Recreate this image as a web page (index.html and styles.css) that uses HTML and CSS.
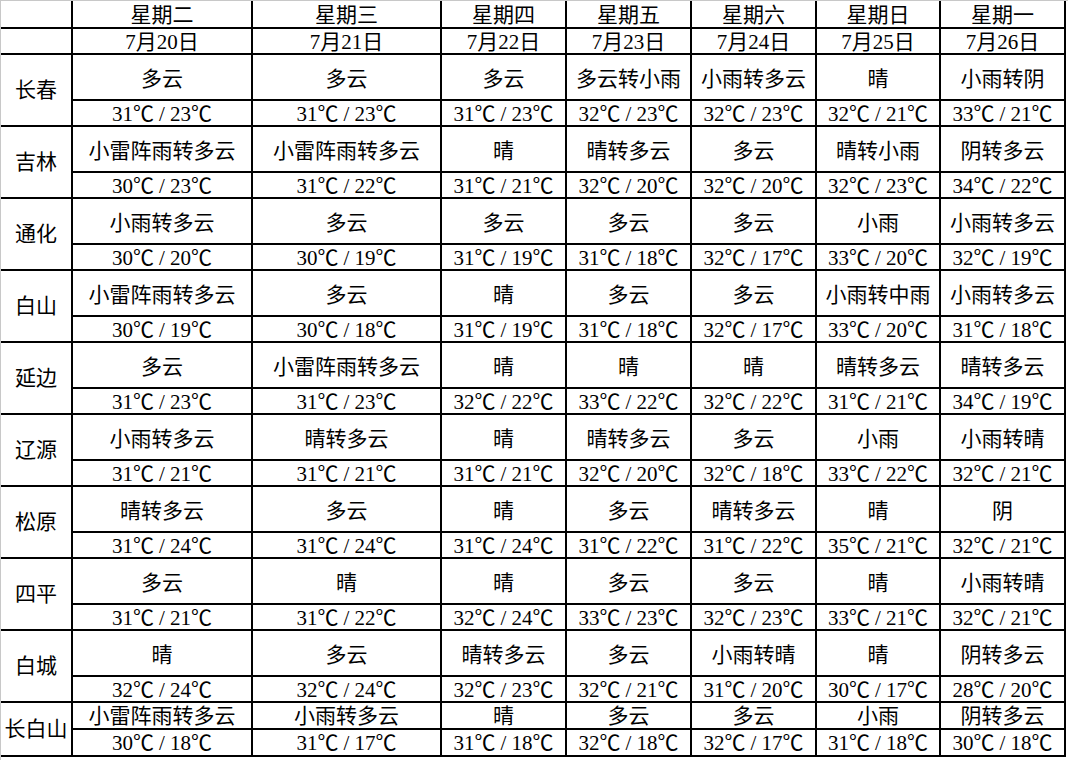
FILE: index.html
```html
<!DOCTYPE html>
<html lang="zh-CN">
<head>
<meta charset="utf-8">
<title>吉林省天气预报</title>
<link rel="stylesheet" href="styles.css">
</head>
<body>
<div class="sheet">
  <div class="grid">
    <div class="cell"></div>
    <div class="cell hd">星期二</div><div class="cell hd">星期三</div><div class="cell hd">星期四</div><div class="cell hd">星期五</div><div class="cell hd">星期六</div><div class="cell hd">星期日</div><div class="cell hd">星期一</div>
    <div class="cell"></div>
    <div class="cell dt">7月20日</div><div class="cell dt">7月21日</div><div class="cell dt">7月22日</div><div class="cell dt">7月23日</div><div class="cell dt">7月24日</div><div class="cell dt">7月25日</div><div class="cell dt">7月26日</div>

    <div class="cell city">长春</div>
    <div class="cell wx">多云</div><div class="cell wx">多云</div><div class="cell wx">多云</div><div class="cell wx">多云转小雨</div><div class="cell wx">小雨转多云</div><div class="cell wx">晴</div><div class="cell wx">小雨转阴</div>
    <div class="cell tp">31℃<span class="sl">/</span>23℃</div><div class="cell tp">31℃<span class="sl">/</span>23℃</div><div class="cell tp">31℃<span class="sl">/</span>23℃</div><div class="cell tp">32℃<span class="sl">/</span>23℃</div><div class="cell tp">32℃<span class="sl">/</span>23℃</div><div class="cell tp">32℃<span class="sl">/</span>21℃</div><div class="cell tp">33℃<span class="sl">/</span>21℃</div>

    <div class="cell city">吉林</div>
    <div class="cell wx">小雷阵雨转多云</div><div class="cell wx">小雷阵雨转多云</div><div class="cell wx">晴</div><div class="cell wx">晴转多云</div><div class="cell wx">多云</div><div class="cell wx">晴转小雨</div><div class="cell wx">阴转多云</div>
    <div class="cell tp">30℃<span class="sl">/</span>23℃</div><div class="cell tp">31℃<span class="sl">/</span>22℃</div><div class="cell tp">31℃<span class="sl">/</span>21℃</div><div class="cell tp">32℃<span class="sl">/</span>20℃</div><div class="cell tp">32℃<span class="sl">/</span>20℃</div><div class="cell tp">32℃<span class="sl">/</span>23℃</div><div class="cell tp">34℃<span class="sl">/</span>22℃</div>

    <div class="cell city">通化</div>
    <div class="cell wx">小雨转多云</div><div class="cell wx">多云</div><div class="cell wx">多云</div><div class="cell wx">多云</div><div class="cell wx">多云</div><div class="cell wx">小雨</div><div class="cell wx">小雨转多云</div>
    <div class="cell tp">30℃<span class="sl">/</span>20℃</div><div class="cell tp">30℃<span class="sl">/</span>19℃</div><div class="cell tp">31℃<span class="sl">/</span>19℃</div><div class="cell tp">31℃<span class="sl">/</span>18℃</div><div class="cell tp">32℃<span class="sl">/</span>17℃</div><div class="cell tp">33℃<span class="sl">/</span>20℃</div><div class="cell tp">32℃<span class="sl">/</span>19℃</div>

    <div class="cell city">白山</div>
    <div class="cell wx">小雷阵雨转多云</div><div class="cell wx">多云</div><div class="cell wx">晴</div><div class="cell wx">多云</div><div class="cell wx">多云</div><div class="cell wx">小雨转中雨</div><div class="cell wx">小雨转多云</div>
    <div class="cell tp">30℃<span class="sl">/</span>19℃</div><div class="cell tp">30℃<span class="sl">/</span>18℃</div><div class="cell tp">31℃<span class="sl">/</span>19℃</div><div class="cell tp">31℃<span class="sl">/</span>18℃</div><div class="cell tp">32℃<span class="sl">/</span>17℃</div><div class="cell tp">33℃<span class="sl">/</span>20℃</div><div class="cell tp">31℃<span class="sl">/</span>18℃</div>

    <div class="cell city">延边</div>
    <div class="cell wx">多云</div><div class="cell wx">小雷阵雨转多云</div><div class="cell wx">晴</div><div class="cell wx">晴</div><div class="cell wx">晴</div><div class="cell wx">晴转多云</div><div class="cell wx">晴转多云</div>
    <div class="cell tp">31℃<span class="sl">/</span>23℃</div><div class="cell tp">31℃<span class="sl">/</span>23℃</div><div class="cell tp">32℃<span class="sl">/</span>22℃</div><div class="cell tp">33℃<span class="sl">/</span>22℃</div><div class="cell tp">32℃<span class="sl">/</span>22℃</div><div class="cell tp">31℃<span class="sl">/</span>21℃</div><div class="cell tp">34℃<span class="sl">/</span>19℃</div>

    <div class="cell city">辽源</div>
    <div class="cell wx">小雨转多云</div><div class="cell wx">晴转多云</div><div class="cell wx">晴</div><div class="cell wx">晴转多云</div><div class="cell wx">多云</div><div class="cell wx">小雨</div><div class="cell wx">小雨转晴</div>
    <div class="cell tp">31℃<span class="sl">/</span>21℃</div><div class="cell tp">31℃<span class="sl">/</span>21℃</div><div class="cell tp">31℃<span class="sl">/</span>21℃</div><div class="cell tp">32℃<span class="sl">/</span>20℃</div><div class="cell tp">32℃<span class="sl">/</span>18℃</div><div class="cell tp">33℃<span class="sl">/</span>22℃</div><div class="cell tp">32℃<span class="sl">/</span>21℃</div>

    <div class="cell city">松原</div>
    <div class="cell wx">晴转多云</div><div class="cell wx">多云</div><div class="cell wx">晴</div><div class="cell wx">多云</div><div class="cell wx">晴转多云</div><div class="cell wx">晴</div><div class="cell wx">阴</div>
    <div class="cell tp">31℃<span class="sl">/</span>24℃</div><div class="cell tp">31℃<span class="sl">/</span>24℃</div><div class="cell tp">31℃<span class="sl">/</span>24℃</div><div class="cell tp">31℃<span class="sl">/</span>22℃</div><div class="cell tp">31℃<span class="sl">/</span>22℃</div><div class="cell tp">35℃<span class="sl">/</span>21℃</div><div class="cell tp">32℃<span class="sl">/</span>21℃</div>

    <div class="cell city">四平</div>
    <div class="cell wx">多云</div><div class="cell wx">晴</div><div class="cell wx">晴</div><div class="cell wx">多云</div><div class="cell wx">多云</div><div class="cell wx">晴</div><div class="cell wx">小雨转晴</div>
    <div class="cell tp">31℃<span class="sl">/</span>21℃</div><div class="cell tp">31℃<span class="sl">/</span>22℃</div><div class="cell tp">32℃<span class="sl">/</span>24℃</div><div class="cell tp">33℃<span class="sl">/</span>23℃</div><div class="cell tp">32℃<span class="sl">/</span>23℃</div><div class="cell tp">33℃<span class="sl">/</span>21℃</div><div class="cell tp">32℃<span class="sl">/</span>21℃</div>

    <div class="cell city">白城</div>
    <div class="cell wx">晴</div><div class="cell wx">多云</div><div class="cell wx">晴转多云</div><div class="cell wx">多云</div><div class="cell wx">小雨转晴</div><div class="cell wx">晴</div><div class="cell wx">阴转多云</div>
    <div class="cell tp">32℃<span class="sl">/</span>24℃</div><div class="cell tp">32℃<span class="sl">/</span>24℃</div><div class="cell tp">32℃<span class="sl">/</span>23℃</div><div class="cell tp">32℃<span class="sl">/</span>21℃</div><div class="cell tp">31℃<span class="sl">/</span>20℃</div><div class="cell tp">30℃<span class="sl">/</span>17℃</div><div class="cell tp">28℃<span class="sl">/</span>20℃</div>

    <div class="cell city">长白山</div>
    <div class="cell wx last">小雷阵雨转多云</div><div class="cell wx last">小雨转多云</div><div class="cell wx last">晴</div><div class="cell wx last">多云</div><div class="cell wx last">多云</div><div class="cell wx last">小雨</div><div class="cell wx last">阴转多云</div>
    <div class="cell tp">30℃<span class="sl">/</span>18℃</div><div class="cell tp">31℃<span class="sl">/</span>17℃</div><div class="cell tp">31℃<span class="sl">/</span>18℃</div><div class="cell tp">32℃<span class="sl">/</span>18℃</div><div class="cell tp">32℃<span class="sl">/</span>17℃</div><div class="cell tp">31℃<span class="sl">/</span>18℃</div><div class="cell tp">30℃<span class="sl">/</span>18℃</div>
  </div>
</div>
</body>
</html>
```
FILE: styles.css
```css
html, body {
  margin: 0;
  padding: 0;
  background: #ffffff;
}

body {
  width: 1068px;
  height: 760px;
  overflow: hidden;
  font-family: "Liberation Serif", "Noto Sans CJK SC", serif;
  font-size: 21px;
  color: #000000;
}

.sheet {
  border-top: 1px solid #c8c8c8;
  border-left: 1px solid #c8c8c8;
  width: 1067px;
  height: 759px;
}

.grid {
  display: grid;
  grid-template-columns: 70px 178px 187px 123px 123px 123px 122px 123px;
  grid-template-rows: 26px 24px repeat(9, 44px 24px) 25px 25px;
  gap: 2px;
  background: #000000;
  padding: 0 2px 2px 0;
  width: 1063px;
}

.cell {
  background: #ffffff;
  display: flex;
  align-items: center;
  justify-content: center;
  line-height: 1;
  white-space: nowrap;
  overflow: hidden;
}

.hd {
  padding-top: 3px;
}

.dt {
  padding-top: 2px;
}

.city {
  grid-row: span 2;
  padding-top: 1px;
}

.wx {
  padding-top: 4px;
}

.wx.last {
  padding-top: 2px;
}

.tp {
  padding-top: 2px;
}

.sl {
  margin: 0 5px;
}
```
